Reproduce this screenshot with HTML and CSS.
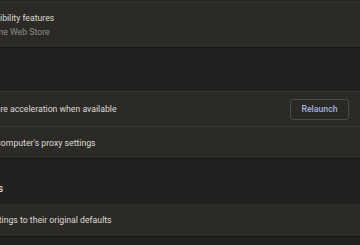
FILE: index.html
```html
<!DOCTYPE html>
<html>
<head lang="en">
    <meta charset="UTF-8">
    <title>Settings</title>
    <link rel="stylesheet" href="styles.css">
</head>
<body>
<div class="page">
    <div class="card card-top">
        <div class="row row-tall">
            <div class="label">
                <div class="title">Add accessibility features</div>
                <div class="sub">Open Chrome Web Store</div>
            </div>
        </div>
    </div>

    <h2 class="heading heading-system">System</h2>
    <div class="card">
        <div class="row row-first">
            <div class="title">Use hardware acceleration when available</div>
            <button class="btn">Relaunch</button>
        </div>
        <div class="row row-second">
            <div class="title">Open your computer's proxy settings</div>
        </div>
    </div>

    <h2 class="heading heading-reset">Reset settings</h2>
    <div class="card card-last">
        <div class="row row-reset">
            <div class="title">Restore settings to their original defaults</div>
        </div>
    </div>
</div>
</body>
</html>
```

FILE: styles.css
```css
* {
    margin: 0;
    padding: 0;
}

html, body {
    height: 100%;
}

body {
    background-color: #21211f;
    font-family: Roboto, "Liberation Sans", sans-serif;
    font-size: 8.7px;
    color: #dddbd5;
    overflow: hidden;
}

.page {
    width: 422px;
    margin-left: -59px;
}

.card {
    background-color: #2b2a27;
    box-shadow: 0 1px 1px rgba(0, 0, 0, .35);
}

.card-top {
    padding-top: 2px;
    background-color: #282724;
}

.row {
    display: flex;
    align-items: center;
    justify-content: space-between;
    padding: 0 14px;
    background-color: #2b2a27;
    border-top: 1px solid #383733;
}

.row-tall {
    height: 44px;
}

.row-first {
    height: 34px;
}

.row-second {
    height: 31px;
}

.row-reset {
    height: 32px;
    border-top: none;
}

.title {
    line-height: 12px;
}

.sub {
    color: #8f8d88;
    line-height: 12px;
    margin-top: 2px;
}

.heading {
    font-size: 10px;
    font-weight: 500;
    color: #dddbd5;
    display: flex;
    align-items: center;
    margin-left: -2px;
}

.heading-system {
    height: 44px;
}

.heading-reset {
    height: 46px;
    padding-top: 14px;
    box-sizing: border-box;
}

.btn {
    width: 59px;
    height: 21px;
    border: 1px solid #4a4944;
    border-radius: 3px;
    background-color: #2a2926;
    color: #9db3de;
    font: 500 8.7px Roboto, "Liberation Sans", sans-serif;
    margin-right: 0;
}
```
